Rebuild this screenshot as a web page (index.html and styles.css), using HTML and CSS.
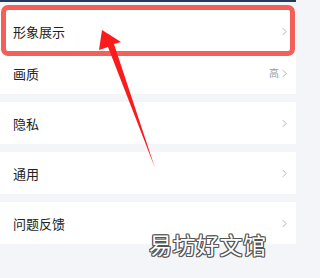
FILE: index.html
```html
<!DOCTYPE html>
<html lang="zh-CN">
<head>
<meta charset="utf-8">
<link rel="stylesheet" href="styles.css">
</head>
<body>
<div class="page">
  <div class="topbar"></div>
  <div class="group first">
    <div class="row"><span class="label">形象展示</span><span class="right"><svg class="chev" viewBox="0 0 6 10"><polyline points="1,1 5,5 1,9"/></svg></span></div>
    <div class="row"><span class="label">画质</span><span class="right"><span class="value">高</span><svg class="chev" viewBox="0 0 6 10"><polyline points="1,1 5,5 1,9"/></svg></span></div>
  </div>
  <div class="group">
    <div class="row"><span class="label">隐私</span><span class="right"><svg class="chev" viewBox="0 0 6 10"><polyline points="1,1 5,5 1,9"/></svg></span></div>
  </div>
  <div class="group">
    <div class="row"><span class="label">通用</span><span class="right"><svg class="chev" viewBox="0 0 6 10"><polyline points="1,1 5,5 1,9"/></svg></span></div>
  </div>
  <div class="group">
    <div class="row"><span class="label">问题反馈</span><span class="right"><svg class="chev" viewBox="0 0 6 10"><polyline points="1,1 5,5 1,9"/></svg></span></div>
  </div>

  <div class="highlight"></div>
  <svg class="arrow" viewBox="0 0 296 278" width="296" height="278">
    <polygon points="102,30 121,42 114,44 155,168 108,47 99,50" fill="#fa1c1c"/>
  </svg>
  <div class="watermark">易坊好文馆</div>
</div>
</body>
</html>
```

FILE: styles.css
```css
html, body {
  margin: 0;
  padding: 0;
}
body {
  background: #f4f5f9;
  font-family: "Noto Sans CJK SC", "Noto Sans", sans-serif;
  width: 296px;
  height: 278px;
  overflow: hidden;
}
.page {
  position: relative;
  width: 296px;
  height: 278px;
  background: #f4f5f9;
}
.topbar {
  height: 2px;
  background: #243a5e;
}
.group {
  background: #fff;
  margin-top: 8px;
}
.row {
  height: 42px;
  display: flex;
  align-items: center;
  justify-content: space-between;
  padding: 0 9px 0 13px;
}
.label {
  font-size: 13px;
  color: #222;
  line-height: 1;
}
.right {
  display: flex;
  align-items: center;
  gap: 3px;
}
.value {
  font-size: 10px;
  color: #9a9a9a;
  line-height: 1;
}
.chev {
  width: 5px;
  height: 9px;
  fill: none;
  stroke: #b4b4b4;
  stroke-width: 1.2;
}
.highlight {
  position: absolute;
  left: 1px;
  top: 5px;
  width: 294px;
  height: 51px;
  box-sizing: border-box;
  border: 5px solid #f3605c;
  border-radius: 7px;
}
.arrow {
  position: absolute;
  left: 0;
  top: 0;
}
.watermark {
  position: absolute;
  left: 149px;
  top: 233px;
  font-size: 23px;
  line-height: 1;
  color: #fff;
  letter-spacing: 0.5px;
  text-shadow: 1px 0 0 #555, -1px 0 0 #555, 0 1px 0 #555, 0 -1px 0 #555,
    1px 1px 0 #555, -1px -1px 0 #555, 1px -1px 0 #555, -1px 1px 0 #555;
}
```
